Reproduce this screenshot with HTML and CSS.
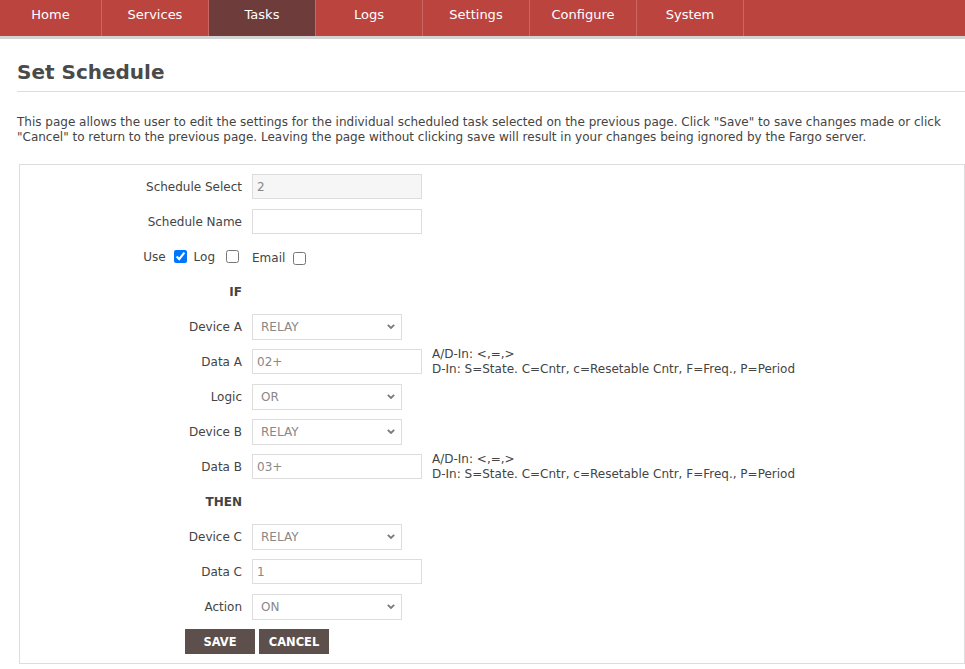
FILE: index.html
```html
<!DOCTYPE html>
<html>

<head>
    <title>Set Schedule</title>
    <meta name="viewport" content="width=device-width, initial-scale=1.0">
    <link rel="stylesheet" href="styles.css">
</head>

<body>
    <!-- Top navigation -->
    <div class="nav">
        <a class="nav-item" href="#">Home</a>
        <a class="nav-item" href="#">Services</a>
        <a class="nav-item active" href="#">Tasks</a>
        <a class="nav-item" href="#">Logs</a>
        <a class="nav-item" href="#">Settings</a>
        <a class="nav-item" href="#">Configure</a>
        <a class="nav-item" href="#">System</a>
    </div>

    <div class="content">
        <h1 class="page-title">Set Schedule</h1>

        <p class="intro">This page allows the user to edit the settings for the individual scheduled task selected on the previous page. Click "Save" to save changes made or click "Cancel" to return to the previous page. Leaving the page without clicking save will result in your changes being ignored by the Fargo server.</p>

        <form class="schedule-form">
            <label class="field-label">Schedule Select</label>
            <div class="field"><input class="text-input readonly" type="text" value="2" readonly></div>

            <label class="field-label">Schedule Name</label>
            <div class="field"><input class="text-input" type="text" value=""></div>

            <div class="field-label check-group">
                <span>Use</span><input class="cb-use" type="checkbox" checked>
                <span>Log</span><input class="cb-log" type="checkbox">
            </div>
            <div class="field check-group email">
                <span>Email</span><input type="checkbox">
            </div>

            <div class="field-label section">IF</div>
            <div class="field"></div>

            <label class="field-label">Device A</label>
            <div class="field">
                <div class="select-box"><span>RELAY</span><svg width="8" height="5" viewBox="0 0 8 5"><path d="M0.8 0.8l3.2 3.2 3.2-3.2" fill="none" stroke="#7a7a7a" stroke-width="1.8"/></svg></div>
            </div>

            <label class="field-label">Data A</label>
            <div class="field">
                <input class="text-input" type="text" value="02+">
                <div class="hint">A/D-In: &lt;,=,&gt;<br>D-In: S=State. C=Cntr, c=Resetable Cntr, F=Freq., P=Period</div>
            </div>

            <label class="field-label">Logic</label>
            <div class="field">
                <div class="select-box"><span>OR</span><svg width="8" height="5" viewBox="0 0 8 5"><path d="M0.8 0.8l3.2 3.2 3.2-3.2" fill="none" stroke="#7a7a7a" stroke-width="1.8"/></svg></div>
            </div>

            <label class="field-label">Device B</label>
            <div class="field">
                <div class="select-box"><span>RELAY</span><svg width="8" height="5" viewBox="0 0 8 5"><path d="M0.8 0.8l3.2 3.2 3.2-3.2" fill="none" stroke="#7a7a7a" stroke-width="1.8"/></svg></div>
            </div>

            <label class="field-label">Data B</label>
            <div class="field">
                <input class="text-input" type="text" value="03+">
                <div class="hint">A/D-In: &lt;,=,&gt;<br>D-In: S=State. C=Cntr, c=Resetable Cntr, F=Freq., P=Period</div>
            </div>

            <div class="field-label section">THEN</div>
            <div class="field"></div>

            <label class="field-label">Device C</label>
            <div class="field">
                <div class="select-box"><span>RELAY</span><svg width="8" height="5" viewBox="0 0 8 5"><path d="M0.8 0.8l3.2 3.2 3.2-3.2" fill="none" stroke="#7a7a7a" stroke-width="1.8"/></svg></div>
            </div>

            <label class="field-label">Data C</label>
            <div class="field"><input class="text-input" type="text" value="1"></div>

            <label class="field-label">Action</label>
            <div class="field">
                <div class="select-box"><span>ON</span><svg width="8" height="5" viewBox="0 0 8 5"><path d="M0.8 0.8l3.2 3.2 3.2-3.2" fill="none" stroke="#7a7a7a" stroke-width="1.8"/></svg></div>
            </div>

            <div class="buttons">
                <button type="button" class="btn">SAVE</button>
                <button type="button" class="btn">CANCEL</button>
            </div>
        </form>
    </div>
</body>

</html>
```

FILE: styles.css
```css
/* Basic styling */
body {
    font-family: "DejaVu Sans", sans-serif;
    margin: 0;
    color: #444;
    font-size: 12px;
}

/* Navigation bar */
.nav {
    display: flex;
    height: 36px;
    background-color: #bc443f;
    border-bottom: 3px solid #d3d3d3;
}

.nav-item {
    width: 106px;
    border-right: 1px solid #cd6763;
    display: flex;
    align-items: center;
    justify-content: center;
    color: #fff;
    text-decoration: none;
    font-size: 13px;
    padding-bottom: 8px;
}

.nav-item:first-child {
    width: 101px;
}

.nav-item.active {
    background-color: #6e3c3b;
}

/* Page content */
.content {
    padding-left: 17px;
}

.page-title {
    margin: 0;
    padding-top: 21px;
    padding-bottom: 7px;
    font-size: 20px;
    line-height: 24px;
    color: #4a4a4a;
    border-bottom: 1px solid #ddd;
}

.intro {
    margin: 23px 0 0;
    line-height: 15px;
    padding-right: 10px;
}

/* Form box */
.schedule-form {
    margin: 19px 0 0 2px;
    border: 1px solid #ddd;
    display: grid;
    grid-template-columns: 222px 1fr;
    grid-auto-rows: 35px;
    column-gap: 10px;
    align-items: center;
    padding: 4px 0 4px;
}

.field-label {
    text-align: right;
}

.field {
    display: flex;
    align-items: center;
}

.section {
    font-weight: bold;
}

.text-input {
    box-sizing: border-box;
    width: 170px;
    height: 25px;
    border: 1px solid #ddd;
    padding: 0 4px;
    font-family: inherit;
    font-size: 12px;
    color: #888;
    outline: none;
}

.text-input.readonly {
    background-color: #f6f6f6;
}

.select-box {
    box-sizing: border-box;
    width: 150px;
    height: 26px;
    border: 1px solid #ddd;
    padding: 0 6px 0 8px;
    display: flex;
    align-items: center;
    justify-content: space-between;
    color: #888;
}

.hint {
    margin-left: 10px;
    font-size: 12px;
    line-height: 15px;
}

/* Use / Log / Email checkboxes */
.check-group {
    display: flex;
    align-items: center;
    justify-content: flex-end;
}

.check-group input {
    width: 13px;
    height: 13px;
    margin: 0;
}

.check-group .cb-use {
    margin: 0 7px 0 8px;
}

.check-group .cb-log {
    margin: 0 3px 0 11px;
}

.check-group.email {
    justify-content: flex-start;
    padding-top: 3px;
}

.check-group.email input {
    margin-left: 8px;
}

/* Buttons */
.buttons {
    grid-column: 1 / span 2;
    padding-left: 165px;
    display: flex;
    gap: 4px;
}

.btn {
    height: 25px;
    width: 70px;
    border: none;
    background-color: #5c4f4c;
    color: #fff;
    font-family: inherit;
    font-weight: bold;
    font-size: 11.5px;
    padding: 0;
}
```
